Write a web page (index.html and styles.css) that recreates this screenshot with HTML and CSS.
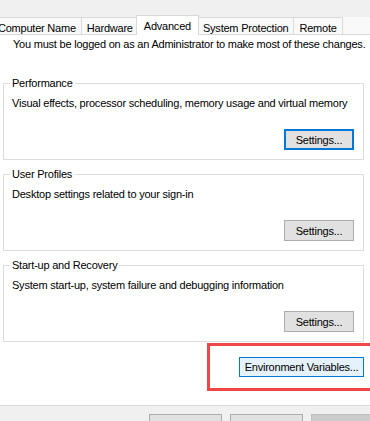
FILE: index.html
```html
<!DOCTYPE html>
<html lang="en">
<head>
    <meta charset="UTF-8">
    <meta name="viewport" content="width=device-width, initial-scale=1.0">
    <title>System Properties</title>
    <link rel="stylesheet" href="styles.css">
</head>
<body>
    <div class="dialog">
        <div class="tabs">
            <div class="tab">Computer Name</div>
            <div class="tab">Hardware</div>
            <div class="tab active">Advanced</div>
            <div class="tab">System Protection</div>
            <div class="tab">Remote</div>
        </div>

        <div class="page">
            <p class="note">You must be logged on as an Administrator to make most of these changes.</p>

            <fieldset class="group">
                <legend>Performance</legend>
                <p class="group-text">Visual effects, processor scheduling, memory usage and virtual memory</p>
                <div class="group-actions">
                    <button class="btn default">Settings...</button>
                </div>
            </fieldset>

            <fieldset class="group">
                <legend>User Profiles</legend>
                <p class="group-text">Desktop settings related to your sign-in</p>
                <div class="group-actions">
                    <button class="btn">Settings...</button>
                </div>
            </fieldset>

            <fieldset class="group">
                <legend>Start-up and Recovery</legend>
                <p class="group-text">System start-up, system failure and debugging information</p>
                <div class="group-actions">
                    <button class="btn">Settings...</button>
                </div>
            </fieldset>

            <div class="env-row">
                <button class="btn env">Environment Variables...</button>
            </div>
        </div>

        <div class="footer">
            <button class="btn footer-btn">OK</button>
            <button class="btn footer-btn">Cancel</button>
            <button class="btn footer-btn" disabled>Apply</button>
        </div>
    </div>

    <!-- annotation box drawn over the screenshot -->
    <div class="highlight"></div>
</body>
</html>
```

FILE: styles.css
```css
body {
    margin: 0;
    background-color: #f0f0f0;
    color: #000;
    font-family: 'Liberation Sans', Arial, sans-serif;
    font-size: 11px;
    letter-spacing: -0.22px;
    overflow: hidden;
}

.dialog {
    width: 400px;
    margin-left: -8px;
    padding-top: 17px;
    background-color: #f0f0f0;
}

/* tab strip */

.tabs {
    display: flex;
    align-items: flex-end;
    height: 17px;
    background-color: #f9f9f9;
    position: relative;
    z-index: 1;
}

.tab {
    height: 17px;
    box-sizing: border-box;
    padding: 4px 5px 0;
    line-height: 13px;
    margin-right: -1px;
    border: 1px solid #d9d9d9;
    border-bottom: none;
    background-color: #f9f9f9;
    white-space: nowrap;
}

.tab.active {
    height: 20px;
    margin: 0 -2px -1px -2px;
    padding: 4px 7px 0;
    background-color: #fff;
    position: relative;
}

/* tab page */

.page {
    background-color: #fff;
    border: 1px solid #d9d9d9;
    padding: 2px 27px 28px 10px;
}

.note {
    margin: 0 0 25px 10px;
    line-height: 14px;
    white-space: nowrap;
}

.group {
    margin: 0 0 7px 0;
    padding: 6px 9px 9px 8px;
    min-width: 0;
    border: 1px solid #dcdcdc;
}

.group legend {
    margin-left: -2px;
    padding: 0 2px;
    line-height: 14px;
}

.group-text {
    margin: 0;
    line-height: 14px;
}

.group-actions {
    display: flex;
    justify-content: flex-end;
    margin-top: 19px;
}

.btn {
    width: 70px;
    height: 21px;
    padding: 0;
    box-sizing: border-box;
    font-family: inherit;
    font-size: 11px;
    letter-spacing: -0.22px;
    color: #000;
    background-color: #e1e1e1;
    border: 1px solid #adadad;
    border-radius: 0;
}

.btn.default {
    border: 2px solid #0078d7;
}

.env-row {
    display: flex;
    justify-content: flex-end;
    margin-top: 15px;
}

.btn.env {
    width: 125px;
    height: 20px;
    background-color: #e5f1fb;
    border-color: #0078d7;
}

/* bottom buttons */

.footer {
    display: flex;
    justify-content: flex-end;
    gap: 8px;
    padding: 8px 8px 8px 0;
}

.footer-btn {
    width: 73px;
}

.footer-btn:disabled {
    background-color: #cccccc;
    border-color: #bfbfbf;
    color: #838383;
}

.highlight {
    position: absolute;
    left: 207px;
    top: 343px;
    width: 170px;
    height: 48px;
    box-sizing: border-box;
    border: 3px solid #f04646;
}
```
